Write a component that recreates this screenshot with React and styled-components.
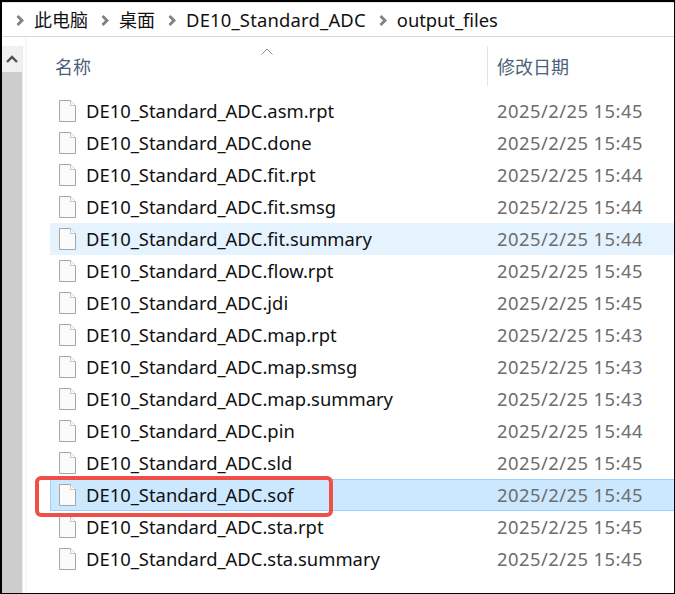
import styled, { createGlobalStyle } from 'styled-components'

const GlobalStyle = createGlobalStyle`
  html, body {
    margin: 0;
    padding: 0;
    background: #fff;
  }
`

const Window = styled.div`
  position: relative;
  width: 675px;
  height: 594px;
  box-sizing: border-box;
  border: solid #000;
  border-width: 2px 1px 1px 2px;
  background: #fff;
  overflow: hidden;
  font-family: "Noto Sans", "Noto Sans CJK SC", sans-serif;
  color: #111;
  display: flex;
  flex-direction: column;
`

const AddressBar = styled.div`
  height: 32px;
  flex: none;
  display: flex;
  align-items: center;
  padding: 0 0 1px 1px;
  border-top: 1px solid #e4e4e4;
  border-bottom: 1px solid #d9d9d9;
  font-size: 18.4px;
`

const Crumb = styled.span`
  white-space: nowrap;
  font-size: ${p => (p.$cjk ? '18px' : '18.4px')};
  letter-spacing: ${p => p.$spacing || '0'};
`

const ChevronIcon = styled.svg`
  flex: none;
  margin: 3px 10px 0 13px;
`

const Body = styled.div`
  flex: 1;
  display: flex;
  min-height: 0;
`

const Scrollbar = styled.div`
  width: 20px;
  flex: none;
  margin-top: 9px;
  background: #f0f0f0;
  border-right: 1px solid #eaeaea;
  display: flex;
  flex-direction: column;
`

const ScrollButton = styled.div`
  height: 26px;
  display: flex;
  align-items: center;
  justify-content: center;
`

const ScrollThumb = styled.div`
  flex: 1;
  background: #cdcdcd;
`

const Content = styled.div`
  flex: 1;
  min-width: 0;
  margin-left: 2px;
  border-left: 2px solid #f7f7f7;
  padding: 9px 0 0 23px;
  position: relative;
`

const HeaderRow = styled.div`
  position: relative;
  height: 40px;
  display: flex;
  align-items: center;
  font-size: 18px;
  color: #4c607a;
  margin-bottom: 9px;
`

const NameHeader = styled.div`
  width: 437px;
  padding-left: 5px;
  box-sizing: border-box;
`

const DateHeader = styled.div`
  height: 40px;
  display: flex;
  align-items: center;
  padding-left: 9px;
  border-left: 1px solid #e5e5e5;
`

const SortArrow = styled.svg`
  position: absolute;
  left: 211px;
  top: 2px;
`

const Row = styled.div`
  height: 32px;
  box-sizing: border-box;
  display: flex;
  align-items: center;
  font-size: 18.4px;
  border: 1px solid ${p => (p.$selected ? '#99d1ff' : 'transparent')};
  border-width: 1px 0 1px 1px;
  background: ${p => (p.$selected ? '#cce8ff' : p.$hover ? '#e5f3ff' : 'transparent')};
`

const FileIcon = styled.svg`
  flex: none;
  margin: 0 10px 0 8px;
`

const FileName = styled.div`
  width: 411px;
  flex: none;
  margin-bottom: 2px;
  white-space: nowrap;
  color: #111;
`

const FileDate = styled.div`
  margin-bottom: 2px;
  white-space: nowrap;
  color: #6d6d6d;
  letter-spacing: 0.45px;
`

const Highlight = styled.div`
  position: absolute;
  left: 33px;
  top: 474px;
  width: 298px;
  height: 41px;
  box-sizing: border-box;
  border: 4px solid #ef4f47;
  border-radius: 6px;
`

const files = [
  ['DE10_Standard_ADC.asm.rpt', '2025/2/25 15:45'],
  ['DE10_Standard_ADC.done', '2025/2/25 15:45'],
  ['DE10_Standard_ADC.fit.rpt', '2025/2/25 15:44'],
  ['DE10_Standard_ADC.fit.smsg', '2025/2/25 15:44'],
  ['DE10_Standard_ADC.fit.summary', '2025/2/25 15:44', 'hover'],
  ['DE10_Standard_ADC.flow.rpt', '2025/2/25 15:45'],
  ['DE10_Standard_ADC.jdi', '2025/2/25 15:45'],
  ['DE10_Standard_ADC.map.rpt', '2025/2/25 15:43'],
  ['DE10_Standard_ADC.map.smsg', '2025/2/25 15:43'],
  ['DE10_Standard_ADC.map.summary', '2025/2/25 15:43'],
  ['DE10_Standard_ADC.pin', '2025/2/25 15:44'],
  ['DE10_Standard_ADC.sld', '2025/2/25 15:45'],
  ['DE10_Standard_ADC.sof', '2025/2/25 15:45', 'selected'],
  ['DE10_Standard_ADC.sta.rpt', '2025/2/25 15:45'],
  ['DE10_Standard_ADC.sta.summary', '2025/2/25 15:45'],
]

function Chevron() {
  return (
    <ChevronIcon width="8" height="11" viewBox="0 0 8 11">
      <path d="M1.5 1L6 5.5L1.5 10" fill="none" stroke="#808080" strokeWidth="2.8" />
    </ChevronIcon>
  )
}

function DocIcon() {
  return (
    <FileIcon width="17" height="22" viewBox="0 0 17 22">
      <path d="M.5.5H11.5L16.5 5.5V21.5H.5Z" fill="#fbfbfb" stroke="#a6a6a6" />
      <path d="M11.5.5V5.5H16.5" fill="#fff" stroke="#c4c4c4" />
    </FileIcon>
  )
}

export default function App() {
  return (
    <>
      <GlobalStyle />
      <Window>
        <AddressBar>
          <Chevron />
          <Crumb $cjk>此电脑</Crumb>
          <Chevron />
          <Crumb $cjk>桌面</Crumb>
          <Chevron />
          <Crumb $spacing="0.2px">DE10_Standard_ADC</Crumb>
          <Chevron />
          <Crumb $spacing="-0.05px">output_files</Crumb>
        </AddressBar>
        <Body>
          <Scrollbar>
            <ScrollButton>
              <svg width="12" height="8" viewBox="0 0 12 8">
                <path d="M1 7L6 2L11 7" fill="none" stroke="#505050" strokeWidth="2.4" />
              </svg>
            </ScrollButton>
            <ScrollThumb />
          </Scrollbar>
          <Content>
            <HeaderRow>
              <SortArrow width="12" height="7" viewBox="0 0 12 7">
                <path d="M.5 6.5L6 1L11.5 6.5" fill="none" stroke="#8c8c8c" />
              </SortArrow>
              <NameHeader>名称</NameHeader>
              <DateHeader>修改日期</DateHeader>
            </HeaderRow>
            {files.map(([name, date, state]) => (
              <Row key={name} $selected={state === 'selected'} $hover={state === 'hover'}>
                <DocIcon />
                <FileName>{name}</FileName>
                <FileDate>{date}</FileDate>
              </Row>
            ))}
          </Content>
        </Body>
        <Highlight />
      </Window>
    </>
  )
}
